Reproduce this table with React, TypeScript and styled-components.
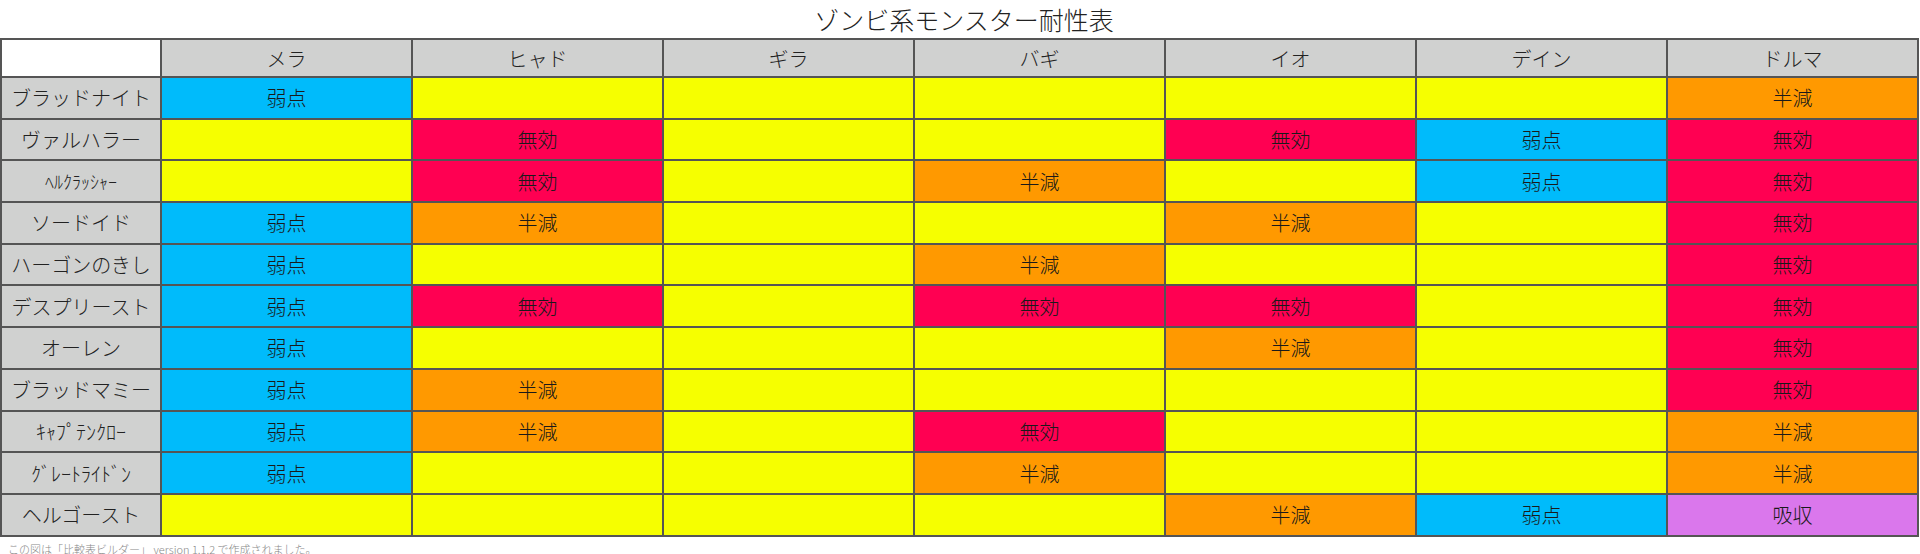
import React from "react";
import styled, { createGlobalStyle } from "styled-components";

type Res = "" | "弱点" | "半減" | "無効" | "吸収";

const spells = ["メラ", "ヒャド", "ギラ", "バギ", "イオ", "デイン", "ドルマ"];

const rows: { name: string; small?: boolean; res: Res[] }[] = [
  { name: "ブラッドナイト", res: ["弱点", "", "", "", "", "", "半減"] },
  { name: "ヴァルハラー", res: ["", "無効", "", "", "無効", "弱点", "無効"] },
  { name: "ﾍﾙｸﾗｯｼｬｰ", small: true, res: ["", "無効", "", "半減", "", "弱点", "無効"] },
  { name: "ソードイド", res: ["弱点", "半減", "", "", "半減", "", "無効"] },
  { name: "ハーゴンのきし", res: ["弱点", "", "", "半減", "", "", "無効"] },
  { name: "デスプリースト", res: ["弱点", "無効", "", "無効", "無効", "", "無効"] },
  { name: "オーレン", res: ["弱点", "", "", "", "半減", "", "無効"] },
  { name: "ブラッドマミー", res: ["弱点", "半減", "", "", "", "", "無効"] },
  { name: "ｷｬﾌﾟﾃﾝｸﾛｰ", res: ["弱点", "半減", "", "無効", "", "", "半減"] },
  { name: "ｸﾞﾚｰﾄﾗｲﾄﾞﾝ", res: ["弱点", "", "", "半減", "", "", "半減"] },
  { name: "ヘルゴースト", res: ["", "", "", "", "半減", "弱点", "吸収"] },
];

const colors: Record<string, string> = {
  "": "#f6ff00",
  弱点: "#00bbfb",
  半減: "#ff9900",
  無効: "#ff0052",
  吸収: "#da77ec",
};

const GlobalStyle = createGlobalStyle`
  body {
    margin: 0;
    background: #fff;
    font-family: "Noto Sans CJK JP", "Noto Sans", sans-serif;
    font-weight: 300;
    color: #222;
  }
`;

const Page = styled.div`
  width: 1920px;
`;

const Title = styled.h1`
  margin: 0;
  height: 38px;
  display: flex;
  align-items: center;
  justify-content: center;
  font-size: 25px;
  font-weight: 300;
  color: #222;
  padding-left: 8px;
`;

const Table = styled.table`
  width: 1918px;
  table-layout: fixed;
  border-collapse: collapse;
  border: 2px solid #555;
`;

const HeadCell = styled.th<{ $blank?: boolean }>`
  height: 36px;
  padding: 0;
  border: 2px solid #555;
  background: ${(p) => (p.$blank ? "#fff" : "#d0d1d0")};
  font-size: 20px;
  font-weight: 300;
  text-align: center;
`;

const NameCell = styled.th<{ $small?: boolean }>`
  height: 39.7px;
  padding: 0;
  border: 2px solid #555;
  background: #d0d1d0;
  font-size: ${(p) => (p.$small ? "18px" : "20px")};
  font-weight: 300;
  text-align: center;
  white-space: nowrap;
`;

const ResCell = styled.td<{ $bg: string }>`
  padding: 0;
  border: 2px solid #555;
  background: ${(p) => p.$bg};
  font-size: 20px;
  font-weight: 300;
  color: #1a1a1a;
  text-align: center;
`;

const Footer = styled.p`
  margin: 4px 0 0 8px;
  font-size: 11px;
  color: #888;
`;

export default function App() {
  return (
    <Page>
      <GlobalStyle />
      <Title>ゾンビ系モンスター耐性表</Title>
      <Table>
        <colgroup>
          <col style={{ width: 160 }} />
          {spells.map((s) => (
            <col key={s} style={{ width: 251 }} />
          ))}
        </colgroup>
        <thead>
          <tr>
            <HeadCell $blank />
            {spells.map((s) => (
              <HeadCell key={s}>{s}</HeadCell>
            ))}
          </tr>
        </thead>
        <tbody>
          {rows.map((r) => (
            <tr key={r.name}>
              <NameCell $small={r.small}>{r.name}</NameCell>
              {r.res.map((v, i) => (
                <ResCell key={i} $bg={colors[v]}>
                  {v}
                </ResCell>
              ))}
            </tr>
          ))}
        </tbody>
      </Table>
      <Footer>この図は「比較表ビルダー」 version 1.1.2 で作成されました。</Footer>
    </Page>
  );
}
